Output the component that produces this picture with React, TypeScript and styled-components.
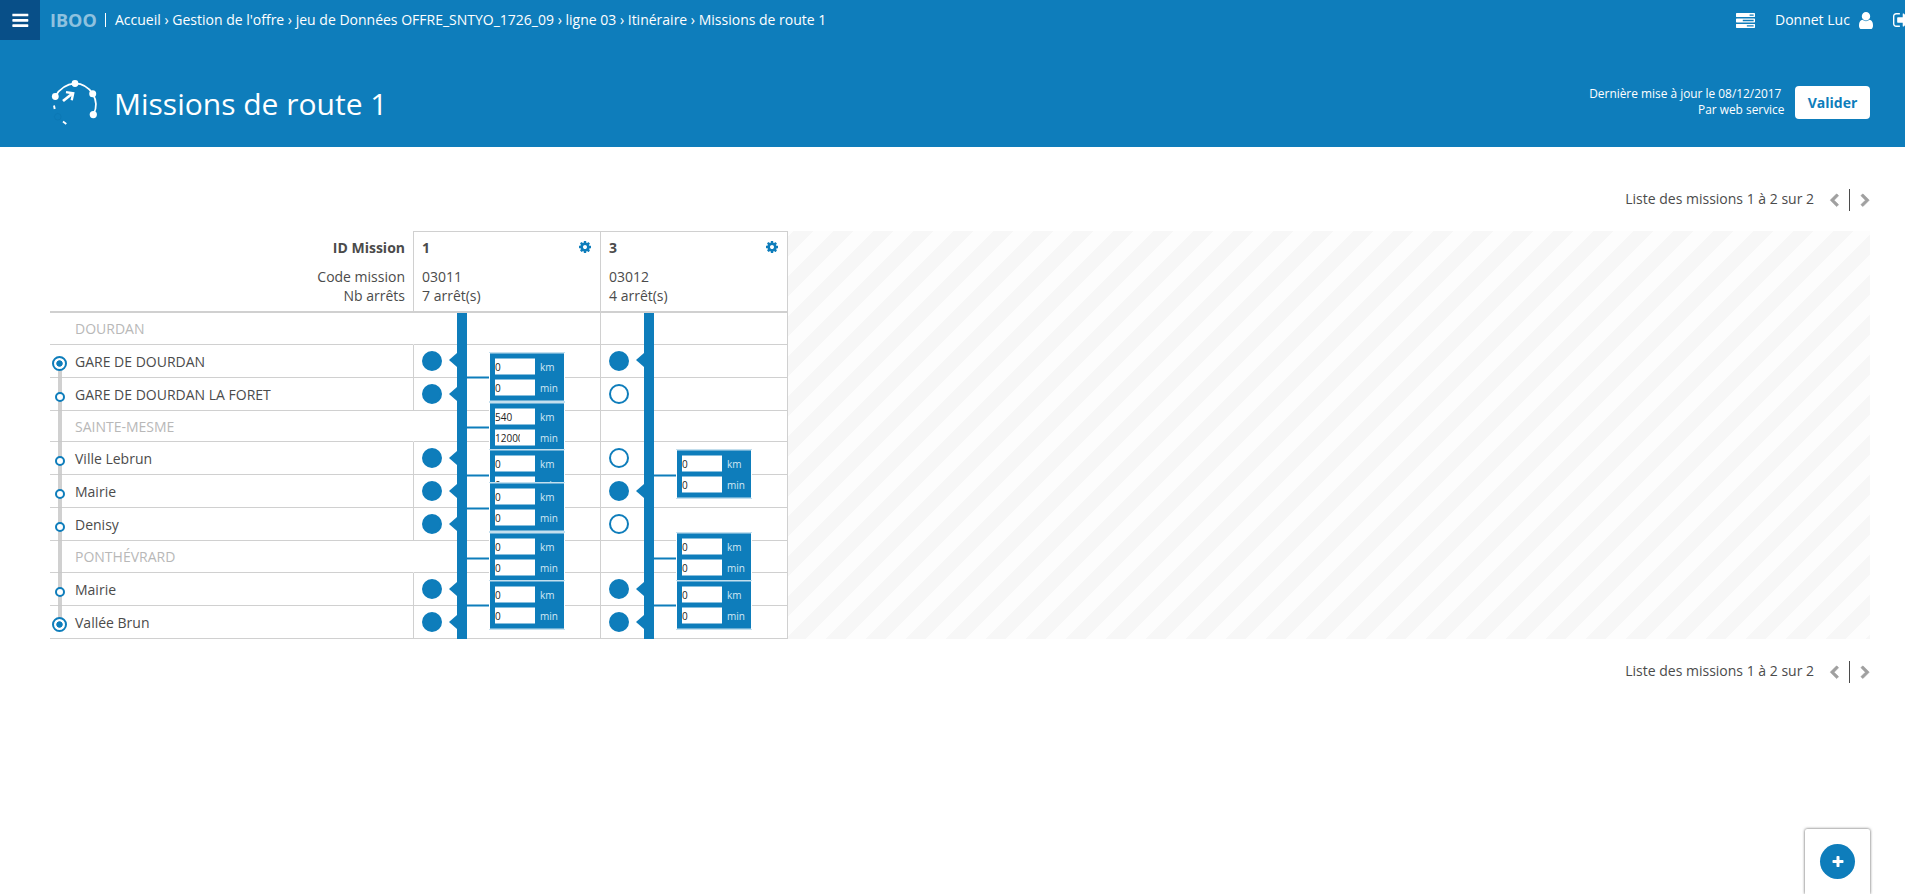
import React from 'react';
import styled, { createGlobalStyle } from 'styled-components';

const blue = '#0e7dbb';
const line = '#d0d0d0';
const ink = '#4b4b4b';

const GlobalStyle = createGlobalStyle`
  * { box-sizing: border-box; }
  body {
    margin: 0;
    background: #fff;
    color: ${ink};
    font: 14px/20px "Open Sans", "Noto Sans", sans-serif;
    overflow: hidden;
  }
`;

const Page = styled.div`
  position: relative;
  height: 894px;
  overflow: hidden;
`;

/* ---------- header ---------- */

const Header = styled.header`
  height: 147px;
  background: ${blue};
  color: #fff;
`;

const TopBar = styled.div`
  display: flex;
  align-items: center;
  height: 40px;
  line-height: 40px;
  white-space: nowrap;
`;

const MenuButton = styled.div`
  display: flex;
  align-items: center;
  justify-content: center;
  width: 40px;
  height: 40px;
  background: #084f88;
`;

const Brand = styled.span`
  margin-left: 10px;
  width: 55px;
  font-size: 18px;
  font-weight: 700;
  color: rgba(255, 255, 255, 0.55);
`;

const BrandRule = styled.span`
  width: 1px;
  height: 14px;
  background: #fff;
`;

const Breadcrumb = styled.nav`
  margin-left: 9px;
  flex: 1;
`;

const UserTools = styled.div`
  display: flex;
  align-items: center;
  flex: none;
  width: 169px;
  overflow: hidden;
`;

const UserName = styled.span`
  flex: none;
  margin-left: 20px;
  width: 84px;
`;

const TitleBar = styled.div`
  display: flex;
  align-items: flex-start;
  padding: 37px 35px 0 50px;
`;

const Title = styled.h1`
  flex: 1;
  margin: 7px 0 0 14px;
  font-size: 30px;
  line-height: 40px;
  font-weight: 400;
`;

const Meta = styled.div`
  margin: 8px 10.5px 0 0;
  font-size: 11.9px;
  line-height: 16px;
  text-align: right;
`;

const SubmitButton = styled.button`
  width: 75px;
  height: 33px;
  margin-top: 9px;
  padding: 0;
  border: 0;
  border-radius: 4px;
  background: #fff;
  color: ${blue};
  font: 700 14px/33px "Open Sans", sans-serif;
`;

/* ---------- pagination ---------- */

const PagerRow = styled.div`
  display: flex;
  align-items: center;
  justify-content: flex-end;
  height: 22px;
  padding-right: 1px;
  line-height: 20px;
`;

const PagerLabel = styled.span`
  height: 22px;
  margin-right: 16px;
`;

const PagerRule = styled.span`
  width: 1px;
  height: 22px;
  margin: 0 10.5px;
  background: ${ink};
`;

/* ---------- table ---------- */

const Main = styled.main`
  padding: 42px 35px 0 50px;
`;

const Board = styled.section`
  display: flex;
  height: 408px;
  margin: 20px 0 22px;
`;

const Stripes = styled.div`
  flex: 1;
  background-image: linear-gradient(
    135deg,
    #fdfdfd 25%, #f7f7f7 25%, #f7f7f7 50%,
    #fdfdfd 50%, #fdfdfd 75%, #f7f7f7 75%
  );
  background-size: 40px 40px;
  background-position: 26px 0;
`;

const StopColumn = styled.div`
  position: relative;
  width: 363px;
`;

const MissionColumn = styled.div<{ $last?: boolean }>`
  position: relative;
  width: ${p => (p.$last ? 188 : 187)}px;
  border-right: ${p => (p.$last ? `1px solid ${line}` : '0')};
`;

const HeadCell = styled.div<{ $labels?: boolean }>`
  position: relative;
  height: 82px;
  padding: 6px 8px 0;
  border-top: 1px solid ${p => (p.$labels ? 'transparent' : line)};
  border-left: ${p => (p.$labels ? '0' : `1px solid ${line}`)};
  border-bottom: 2px solid ${line};
  text-align: ${p => (p.$labels ? 'right' : 'left')};
  line-height: 19px;
`;

const HeadTitle = styled.div`
  display: flex;
  justify-content: space-between;
  margin-bottom: 9px;
  font-weight: 700;
  line-height: 20px;
  & > svg { margin: 3px 1px 0 0; }
`;

const LabelTitle = styled(HeadTitle)`
  justify-content: flex-end;
`;

const StopRow = styled.div<{ $h: number; $city?: boolean }>`
  position: relative;
  height: ${p => p.$h}px;
  line-height: ${p => (p.$city ? 31 : 33)}px;
  padding-left: 25px;
  border-bottom: 1px solid ${line};
  color: ${p => (p.$city ? '#b8b8b8' : ink)};
`;

const Track = styled.div`
  position: absolute;
  left: 8px;
  top: 135px;
  width: 4px;
  height: 255px;
  z-index: 1;
  background: rgba(200, 200, 200, 0.85);
`;

const Marker = styled.span<{ $terminal?: boolean }>`
  position: absolute;
  z-index: 2;
  left: ${p => (p.$terminal ? 2 : 5)}px;
  top: ${p => (p.$terminal ? 11 : 14)}px;
  width: ${p => (p.$terminal ? 15 : 10)}px;
  height: ${p => (p.$terminal ? 15 : 10)}px;
  border: 2px solid ${blue};
  border-radius: 50%;
  background: ${p =>
    p.$terminal ? `radial-gradient(circle, ${blue} 2.8px, #fff 3.6px)` : '#fff'};
`;

const Cell = styled.div<{ $h: number; $open?: boolean }>`
  position: relative;
  height: ${p => p.$h}px;
  padding: 6px 0 0 8px;
  border-left: 1px solid ${p => (p.$open ? 'transparent' : line)};
  border-bottom: 1px solid ${line};
`;

const StopDot = styled.div<{ $on: boolean }>`
  width: 20px;
  height: 20px;
  border: 2px solid ${blue};
  border-radius: 50%;
  background: ${p => (p.$on ? blue : '#fff')};
`;

const Notch = styled.span<{ $top: number }>`
  position: absolute;
  left: 35px;
  top: ${p => p.$top}px;
  border: 7px solid transparent;
  border-left-width: 0;
  border-right: 8px solid ${blue};
`;

const Bar = styled.div`
  position: absolute;
  z-index: 1;
  left: 44px;
  top: 82px;
  bottom: 0;
  width: 10px;
  background: ${blue};
`;

const Connector = styled.span<{ $top: number }>`
  position: absolute;
  left: 53px;
  top: ${p => p.$top}px;
  width: 23px;
  height: 3px;
  border: solid #86bedd;
  border-width: 1px 0;
  background: ${blue};
`;

const Link = styled.div<{ $top: number }>`
  position: absolute;
  z-index: 2;
  left: 75px;
  top: ${p => p.$top}px;
  width: 76px;
  height: 50px;
  border: solid #c3dfee;
  border-width: 1px 0;
  background: #fff;
  padding: 0 1px;
`;

const LinkBody = styled.div`
  height: 48px;
  padding: 4px 0 0 5px;
  border: solid #6bafd5;
  border-width: 1px 0;
  background: ${blue};
`;

const Field = styled.div`
  display: flex;
  height: 17px;
  margin-bottom: 4px;
  color: #d3e8f4;
  font-size: 10px;
  line-height: 19px;
`;

const Value = styled.div`
  width: 40px;
  height: 17px;
  margin-right: 5px;
  border: solid #86bedd;
  border-width: 1px 0;
  background: #fff;
  color: #222;
  line-height: 17px;
`;

const Digits = styled.div`
  width: 24.5px;
  height: 15px;
  overflow: hidden;
`;

/* ---------- floating action ---------- */

const ActionPanel = styled.div`
  position: absolute;
  right: 35px;
  bottom: 0;
  display: flex;
  justify-content: center;
  width: 65px;
  height: 65px;
  padding-top: 15px;
  border-radius: 2px 2px 0 0;
  background: #fff;
  box-shadow: 0 0 3px rgba(0, 0, 0, 0.7);
`;

const AddButton = styled.div`
  display: flex;
  align-items: center;
  justify-content: center;
  width: 35px;
  height: 35px;
  border-radius: 50%;
  background: ${blue};
  color: #fff;
`;

/* ---------- icons ---------- */

const Icon = styled.svg`
  display: block;
  flex: none;
  fill: currentColor;
`;

const PersonIcon = styled(Icon)`
  margin-right: 20px;
`;
const CogIcon = styled(Icon)`
  color: ${blue};
`;
const ChevronIcon = styled(Icon)<{ $flip?: boolean }>`
  color: #a0a0a0;
  stroke: currentColor;
  stroke-width: 70;
  overflow: visible;
  transform: ${p => (p.$flip ? 'scaleX(-1)' : 'none')};
`;

const chevronPath =
  'M1427 301l-531 531 531 531q19 19 19 45t-19 45l-166 166q-19 19-45 19t-45-19l-742-742q-19-19-19-45t19-45l742-742q19-19 45-19t45 19l166 166q19 19 19 45t-19 45z';
const cogPath =
  'M1152 896q0-106-75-181t-181-75-181 75-75 181 75 181 181 75 181-75 75-181zm512-109v222q0 12-8 23t-20 13l-185 28q-19 54-39 91 35 50 107 138 10 12 10 25t-9 23q-27 37-99 108t-94 71q-12 0-26-9l-138-108q-44 23-91 38-16 136-29 186-7 28-36 28h-222q-14 0-24.5-8.5t-11.5-21.5l-28-184q-49-16-90-37l-141 107q-10 9-25 9-14 0-25-11-126-114-165-168-7-10-7-23 0-12 8-23 15-21 51-66.5t54-70.5q-27-50-41-99l-183-27q-13-2-21-12.5t-8-23.5v-222q0-12 8-23t19-13l186-28q14-46 39-92-40-57-107-138-10-12-10-24 0-10 9-23 26-36 98.5-107.5t94.5-71.5q13 0 26 10l138 107q44-23 91-38 16-136 29-186 7-28 36-28h222q14 0 24.5 8.5t11.5 21.5l28 184q49 16 90 37l142-107q9-9 24-9 13 0 25 10 129 119 165 170 7 8 7 22 0 12-8 23-15 21-51 66.5t-54 70.5q26 50 41 98l183 28q13 2 21 12.5t8 23.5z';

const RouteLogo = () => (
  <svg width="50" height="50" viewBox="50 77 50 50" fill="none" stroke="#fff">
    <path d="M55.3 96.3Q62 84.5 75 83.3Q86.5 83.8 92.7 93.7Q98.8 104 93.5 114.5" strokeWidth="1.7" />
    <g fill="#fff" stroke="none">
      <circle cx="55.3" cy="96.5" r="3.4" />
      <circle cx="75" cy="83.5" r="3.4" />
      <circle cx="92.7" cy="93.7" r="3.5" />
      <circle cx="93.3" cy="114.6" r="3.6" />
    </g>
    <path d="M63 101L72.5 93.5" strokeWidth="2.8" />
    <path d="M66 92.1L73.2 93.2L71.7 100.3" strokeWidth="2.4" />
    <path d="M54 105.5L54.7 109" strokeWidth="1.9" />
    <path d="M63 121.6L66.3 124" strokeWidth="1.9" />
    <circle cx="57.8" cy="116.8" r="3.3" stroke="#0b76b2" strokeWidth="0.7" />
  </svg>
);

const Pager = () => (
  <PagerRow>
    <PagerLabel>Liste des missions 1 à 2 sur 2</PagerLabel>
    <ChevronIcon width="8.5" height="12.5" viewBox="365 36 1081 1602">
      <path d={chevronPath} />
    </ChevronIcon>
    <PagerRule />
    <ChevronIcon $flip width="8.5" height="12.5" viewBox="365 36 1081 1602">
      <path d={chevronPath} />
    </ChevronIcon>
  </PagerRow>
);

/* ---------- data ---------- */

type Stop = { name: string; h: number; city?: boolean; terminal?: boolean };

const stops: Stop[] = [
  { name: 'DOURDAN', h: 32, city: true },
  { name: 'GARE DE DOURDAN', h: 33, terminal: true },
  { name: 'GARE DE DOURDAN LA FORET', h: 33 },
  { name: 'SAINTE-MESME', h: 31, city: true },
  { name: 'Ville Lebrun', h: 33 },
  { name: 'Mairie', h: 33 },
  { name: 'Denisy', h: 33 },
  { name: 'PONTHÉVRARD', h: 32, city: true },
  { name: 'Mairie', h: 33 },
  { name: 'Vallée Brun', h: 33, terminal: true },
];

type Gap = { km: string; min: string; top: number; wire: number };
type Mission = { id: string; code: string; served: number[]; gaps: Record<number, Gap> };

const gap = (top: number, wire: number, km = '0', min = '0'): Gap => ({ km, min, top, wire });

const missions: Mission[] = [
  {
    id: '1',
    code: '03011',
    served: [1, 2, 4, 5, 6, 8, 9],
    gaps: {
      1: gap(7, 31),
      2: gap(24, 48, '540', '12000'),
      4: gap(7, 32),
      5: gap(7, 32),
      6: gap(24, 49),
      8: gap(7, 31),
    },
  },
  {
    id: '3',
    code: '03012',
    served: [1, 5, 8, 9],
    gaps: { 4: gap(7, 32), 6: gap(24, 49), 8: gap(7, 31) },
  },
];

const LinkBox = ({ data }: { data: Gap }) => (
  <>
    <Connector $top={data.wire} />
    <Link $top={data.top}>
      <LinkBody>
        <Field>
          <Value><Digits>{data.km}</Digits></Value>km
        </Field>
        <Field>
          <Value><Digits>{data.min}</Digits></Value>min
        </Field>
      </LinkBody>
    </Link>
  </>
);

const MissionView = ({ mission, first, last }: { mission: Mission; first: boolean; last: boolean }) => (
  <MissionColumn $last={last}>
    <HeadCell>
      <HeadTitle>
        {mission.id}
        <CogIcon width="12" height="12" viewBox="128 128 1536 1536">
          <path d={cogPath} />
        </CogIcon>
      </HeadTitle>
      <div>{mission.code}</div>
      <div>{mission.served.length} arrêt(s)</div>
    </HeadCell>
    {stops.map((stop, i) => (
      <Cell key={i} $h={stop.h} $open={stop.city && first}>
        {!stop.city && <StopDot $on={mission.served.includes(i)} />}
        {mission.served.includes(i) && <Notch $top={i === 1 ? 8 : 9} />}
        {mission.gaps[i] && <LinkBox data={mission.gaps[i]} />}
      </Cell>
    ))}
    <Bar />
  </MissionColumn>
);

export default function App() {
  return (
    <Page>
      <GlobalStyle />
      <Header>
        <TopBar>
          <MenuButton>
            <Icon width="18.67" height="18.67" viewBox="0 0 1792 1792">
              <path d="M1664 1344v128q0 26-19 45t-45 19h-1408q-26 0-45-19t-19-45v-128q0-26 19-45t45-19h1408q26 0 45 19t19 45zm0-512v128q0 26-19 45t-45 19h-1408q-26 0-45-19t-19-45v-128q0-26 19-45t45-19h1408q26 0 45 19t19 45zm0-512v128q0 26-19 45t-45 19h-1408q-26 0-45-19t-19-45v-128q0-26 19-45t45-19h1408q26 0 45 19t19 45z" />
            </Icon>
          </MenuButton>
          <Brand>IBOO</Brand>
          <BrandRule />
          <Breadcrumb>
            Accueil › Gestion de l'offre › jeu de Données OFFRE_SNTYO_1726_09 › ligne 03 › Itinéraire › Missions de route 1
          </Breadcrumb>
          <UserTools>
            <Icon width="19" height="15" viewBox="0 128 1792 1408">
              <path d="M1024 1408h640v-128h-640v128zm-384-512h1024v-128h-1024v128zm640-512h384v-128h-384v128zm512 832v256q0 26-19 45t-45 19h-1664q-26 0-45-19t-19-45v-256q0-26 19-45t45-19h1664q26 0 45 19t19 45zm0-512v256q0 26-19 45t-45 19h-1664q-26 0-45-19t-19-45v-256q0-26 19-45t45-19h1664q26 0 45 19t19 45zm0-512v256q0 26-19 45t-45 19h-1664q-26 0-45-19t-19-45v-256q0-26 19-45t45-19h1664q26 0 45 19t19 45z" />
            </Icon>
            <UserName>Donnet Luc</UserName>
            <PersonIcon width="14" height="17" viewBox="256 128 1280 1536" preserveAspectRatio="none">
              <path d="M1536 1399q0 109-62.5 187t-150.5 78h-854q-88 0-150.5-78t-62.5-187q0-85 8.5-160.5t31.5-152 58.5-131 94-89 134.5-34.5q131 128 313 128t313-128q76 0 134.5 34.5t94 89 58.5 131 31.5 152 8.5 160.5zm-256-887q0 159-112.5 271.5t-271.5 112.5-271.5-112.5-112.5-271.5 112.5-271.5 271.5-112.5 271.5 112.5 112.5 271.5z" />
            </PersonIcon>
            <Icon width="17" height="14" viewBox="64 256 1568 1280">
              <path d="M704 1440q0 4 1 20t.5 26.5-3 23.5-10 19.5-20.5 6.5h-320q-119 0-203.5-84.5t-84.5-203.5v-704q0-119 84.5-203.5t203.5-84.5h320q13 0 22.5 9.5t9.5 22.5q0 4 1 20t.5 26.5-3 23.5-10 19.5-20.5 6.5h-320q-66 0-113 47t-47 113v704q0 66 47 113t113 47h312l11.5 1 11.5 3 8 5.5 7 9 2 13.5zm928-544q0 26-19 45l-544 544q-19 19-45 19t-45-19-19-45v-288h-448q-26 0-45-19t-19-45v-384q0-26 19-45t45-19h448v-288q0-26 19-45t45-19 45 19l544 544q19 19 19 45z" />
            </Icon>
          </UserTools>
        </TopBar>
        <TitleBar>
          <RouteLogo />
          <Title>Missions de route 1</Title>
          <Meta>
            <div>Dernière mise à jour le 08/12/2017&nbsp;</div>
            <div>Par web service</div>
          </Meta>
          <SubmitButton>Valider</SubmitButton>
        </TitleBar>
      </Header>

      <Main>
        <Pager />
        <Board>
          <StopColumn>
            <HeadCell $labels>
              <LabelTitle>ID Mission</LabelTitle>
              <div>Code mission</div>
              <div>Nb arrêts</div>
            </HeadCell>
            {stops.map((stop, i) => (
              <StopRow key={i} $h={stop.h} $city={stop.city}>
                {!stop.city && <Marker $terminal={stop.terminal} />}
                {stop.name}
              </StopRow>
            ))}
            <Track />
          </StopColumn>
          {missions.map((mission, i) => (
            <MissionView
              key={mission.id}
              mission={mission}
              first={i === 0}
              last={i === missions.length - 1}
            />
          ))}
          <Stripes />
        </Board>
        <Pager />
      </Main>

      <ActionPanel>
        <AddButton>
          <Icon width="14" height="14" viewBox="0 0 1792 1792">
            <path d="M1600 736v192q0 40-28 68t-68 28h-416v416q0 40-28 68t-68 28h-192q-40 0-68-28t-28-68v-416h-416q-40 0-68-28t-28-68v-192q0-40 28-68t68-28h416v-416q0-40 28-68t68-28h192q40 0 68 28t28 68v416h416q40 0 68 28t28 68z" />
          </Icon>
        </AddButton>
      </ActionPanel>
    </Page>
  );
}
